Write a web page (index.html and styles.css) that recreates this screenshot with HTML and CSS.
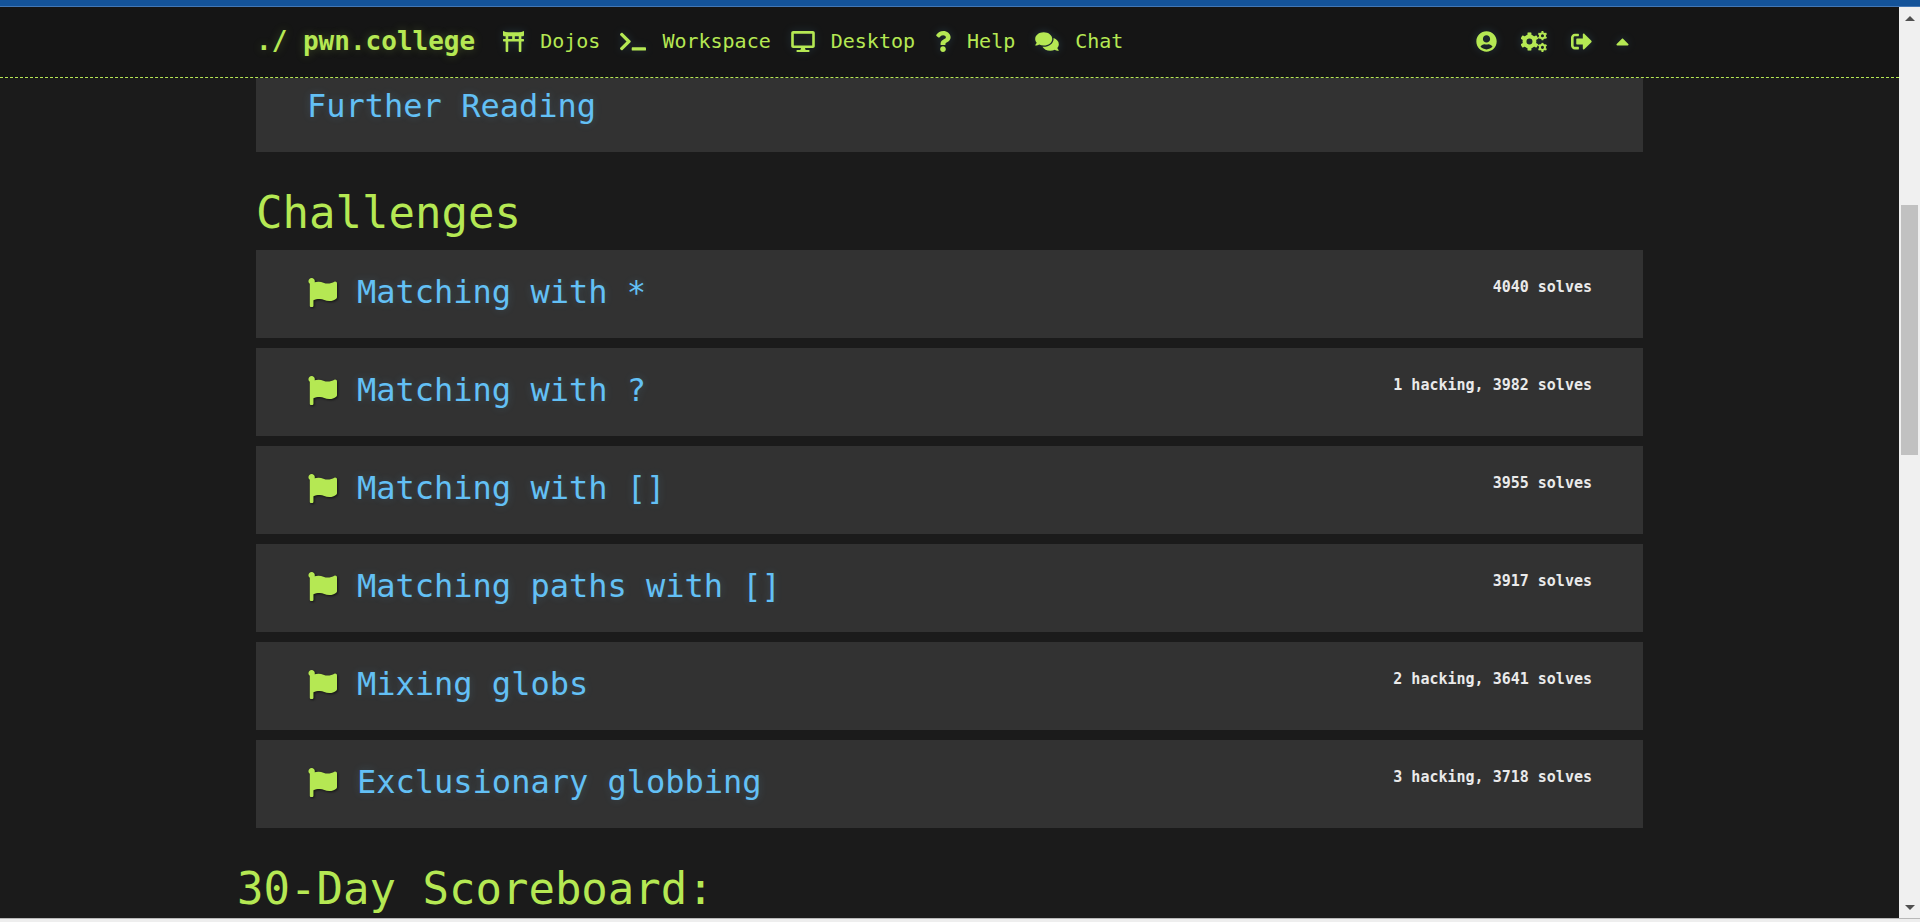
FILE: index.html
```html
<!DOCTYPE html>
<html lang="en">
<head>
<meta charset="utf-8">
<title>pwn.college</title>
<link rel="stylesheet" href="styles.css">
</head>
<body>
<svg class="sprite" aria-hidden="true">
  <symbol id="flag" viewBox="0 0 512 512"><path d="M349.565 98.783C295.978 98.783 251.721 64 184.348 64c-24.955 0-47.309 4.384-68.045 12.013a55.947 55.947 0 0 0 3.586-23.562C118.117 24.015 94.806 1.206 66.338.048 34.345-1.254 8 24.296 8 56c0 19.026 9.497 35.825 24 45.945V488c0 13.255 10.745 24 24 24h16c13.255 0 24-10.745 24-24v-94.4c28.311-12.064 63.582-22.122 114.435-22.122 53.588 0 97.844 34.783 165.217 34.783 48.169 0 86.667-16.294 122.505-40.858C506.84 359.452 512 349.571 512 339.045v-243.1c0-23.393-24.269-38.87-45.485-29.016-34.338 15.948-76.454 31.854-116.95 31.854z"/></symbol>
  <symbol id="gear" viewBox="-100 -100 200 200">
    <circle r="53" fill="none" stroke="currentColor" stroke-width="42"/>
    <g id="teeth"><rect x="-21" y="-98" width="42" height="36" rx="7"/><rect x="-21" y="62" width="42" height="36" rx="7"/></g>
    <use href="#teeth" transform="rotate(60)"/><use href="#teeth" transform="rotate(120)"/>
  </symbol>
</svg>
<div class="window-edge"></div>
<div class="viewport">
  <div class="page">
    <header class="navbar">
      <div class="container nav-row">
        <a class="brand" href="#">./ pwn.college</a>
        <nav class="nav-links">
          <a href="#"><svg class="icon w21" viewBox="0 0 512 512"><path d="M376.45 32h-240.9A303.17 303.17 0 0 1 0 0v96c0 17.67 14.33 32 32 32h32v64H16c-8.84 0-16 7.16-16 16v32c0 8.84 7.16 16 16 16h48v240c0 8.84 7.16 16 16 16h32c8.84 0 16-7.16 16-16V256h256v240c0 8.84 7.16 16 16 16h32c8.84 0 16-7.16 16-16V256h48c8.84 0 16-7.16 16-16v-32c0-8.84-7.16-16-16-16h-48v-64h32c17.67 0 32-14.33 32-32V0a303.17 303.17 0 0 1-135.55 32zM128 128h96v64h-96v-64zm256 64h-96v-64h96v64z"/></svg><span>Dojos</span></a>
          <a href="#"><svg class="icon w26" viewBox="0 0 640 512"><path d="M257.981 272.971L63.638 467.314c-9.373 9.373-24.569 9.373-33.941 0L7.029 444.647c-9.357-9.357-9.375-24.522-.04-33.901L161.011 256 6.99 101.255c-9.335-9.379-9.317-24.544.04-33.901l22.667-22.667c9.373-9.373 24.569-9.373 33.941 0L257.981 239.03c9.373 9.372 9.373 24.568 0 33.941zM640 456v-32c0-13.255-10.745-24-24-24H312c-13.255 0-24 10.745-24 24v32c0 13.255 10.745 24 24 24h304c13.255 0 24-10.745 24-24z"/></svg><span>Workspace</span></a>
          <a href="#"><svg class="icon w24" viewBox="0 0 576 512"><path d="M528 0H48C21.5 0 0 21.5 0 48v320c0 26.5 21.5 48 48 48h192l-16 48h-72c-13.3 0-24 10.7-24 24s10.7 24 24 24h272c13.3 0 24-10.7 24-24s-10.7-24-24-24h-72l-16-48h192c26.5 0 48-21.5 48-48V48c0-26.5-21.5-48-48-48zm-16 352H64V64h448v288z"/></svg><span>Desktop</span></a>
          <a href="#"><svg class="icon w16" viewBox="0 0 384 512"><path d="M202.021 0C122.202 0 70.503 32.703 29.914 91.026c-7.363 10.58-5.093 25.086 5.178 32.874l43.138 32.709c10.373 7.865 25.132 6.026 33.253-4.148 25.049-31.381 43.63-49.449 82.757-49.449 30.764 0 68.816 19.799 68.816 49.631 0 22.552-18.617 34.134-48.993 51.164-35.423 19.86-82.299 44.576-82.299 106.405V320c0 13.255 10.745 24 24 24h72.471c13.255 0 24-10.745 24-24v-5.773c0-42.86 125.268-44.645 125.268-160.627C377.504 66.256 286.902 0 202.021 0zM192 373.459c-38.196 0-69.271 31.075-69.271 69.271 0 38.195 31.075 69.27 69.271 69.27s69.271-31.075 69.271-69.271-31.075-69.27-69.271-69.27z"/></svg><span>Help</span></a>
          <a href="#"><svg class="icon w24" viewBox="0 0 576 512"><path d="M416 192c0-88.4-93.1-160-208-160S0 103.6 0 192c0 34.3 14.1 65.9 38 92-13.4 30.2-35.5 54.2-35.8 54.5-2.2 2.3-2.8 5.7-1.5 8.7S4.8 352 8 352c36.6 0 66.9-12.3 88.7-25 32.2 15.7 70.3 25 111.3 25 114.9 0 208-71.6 208-160zm122 220c23.9-26 38-57.7 38-92 0-66.9-53.5-124.2-129.3-148.1.9 6.6 1.3 13.3 1.3 20.1 0 105.9-107.7 192-240 192-10.8 0-21.3-.8-31.7-1.9C207.8 439.6 281.8 480 368 480c41 0 79.1-9.2 111.3-25 21.8 12.7 52.1 25 88.7 25 3.2 0 6.1-1.9 7.3-4.8 1.3-2.9.7-6.3-1.5-8.7-.3-.3-22.4-24.2-35.8-54.5z"/></svg><span>Chat</span></a>
        </nav>
        <div class="nav-tools">
          <a href="#" aria-label="Profile"><svg class="icon w21" viewBox="0 0 496 512"><path d="M248 8C111 8 0 119 0 256s111 248 248 248 248-111 248-248S385 8 248 8zm0 96c48.6 0 88 39.4 88 88s-39.4 88-88 88-88-39.4-88-88 39.4-88 88-88zm0 344c-58.7 0-111.3-26.6-146.5-68.2 18.8-35.4 55.6-59.8 98.5-59.8 2.4 0 4.8.4 7.1 1.1 13 4.2 26.6 6.9 40.9 6.9 14.3 0 28-2.7 40.9-6.9 2.3-.7 4.7-1.1 7.1-1.1 42.9 0 79.7 24.4 98.5 59.8C359.3 421.4 306.7 448 248 448z"/></svg></a>
          <a href="#" aria-label="Settings"><svg class="icon w26" viewBox="0 0 640 512"><use href="#gear" x="-22" y="26" width="460" height="460"/><use href="#gear" x="410" y="-4" width="236" height="236"/><use href="#gear" x="410" y="282" width="236" height="236"/></svg></a>
          <a href="#" aria-label="Log out"><svg class="icon w21" viewBox="0 0 512 512"><path d="M497 273L329 441c-15 15-41 4.5-41-17v-96H152c-13.3 0-24-10.7-24-24v-96c0-13.3 10.7-24 24-24h136V88c0-21.4 25.9-32 41-17l168 168c9.3 9.4 9.3 24.6 0 34zM192 436v-40c0-6.6-5.4-12-12-12H96c-17.7 0-32-14.3-32-32V160c0-17.7 14.3-32 32-32h84c6.6 0 12-5.4 12-12V76c0-6.6-5.4-12-12-12H96c-53 0-96 43-96 96v192c0 53 43 96 96 96h84c6.6 0 12-5.4 12-12z"/></svg></a>
          <button type="button" aria-label="Hide navigation bar"><svg class="icon w13" viewBox="0 0 320 512"><path d="M288.662 352H31.338c-17.818 0-26.741-21.543-14.142-34.142l128.662-128.662c7.81-7.81 20.474-7.81 28.284 0l128.662 128.662c12.6 12.599 3.676 34.142-14.142 34.142z"/></svg></button>
        </div>
      </div>
    </header>
    <main class="container">
      <section class="cards readings">
        <article class="card"><h4 class="title"><a href="#">Further Reading</a></h4></article>
      </section>
      <h2>Challenges</h2>
      <section class="cards">
        <article class="card"><svg class="flag"><use href="#flag"/></svg><h4 class="title"><a href="#">Matching with *</a></h4><span class="solves">4040 solves</span></article>
        <article class="card"><svg class="flag"><use href="#flag"/></svg><h4 class="title"><a href="#">Matching with ?</a></h4><span class="solves">1 hacking, 3982 solves</span></article>
        <article class="card"><svg class="flag"><use href="#flag"/></svg><h4 class="title"><a href="#">Matching with []</a></h4><span class="solves">3955 solves</span></article>
        <article class="card"><svg class="flag"><use href="#flag"/></svg><h4 class="title"><a href="#">Matching paths with []</a></h4><span class="solves">3917 solves</span></article>
        <article class="card"><svg class="flag"><use href="#flag"/></svg><h4 class="title"><a href="#">Mixing globs</a></h4><span class="solves">2 hacking, 3641 solves</span></article>
        <article class="card"><svg class="flag"><use href="#flag"/></svg><h4 class="title"><a href="#">Exclusionary globbing</a></h4><span class="solves">3 hacking, 3718 solves</span></article>
      </section>
      <h2 class="scoreboard">30-Day Scoreboard:</h2>
    </main>
  </div>
  <div class="scrollbar">
    <button type="button" aria-label="Scroll up"><svg viewBox="0 0 10 5"><path d="M5 0l5 5H0z"/></svg></button>
    <div class="track"><div class="thumb"></div></div>
    <button type="button" aria-label="Scroll down"><svg viewBox="0 0 10 5"><path d="M0 0h10L5 5z"/></svg></button>
  </div>
</div>
<div class="window-foot"></div>
</body>
</html>
```

FILE: styles.css
```css
* {
  box-sizing: border-box;
}

body {
  margin: 0;
  height: 100vh;
  display: flex;
  flex-direction: column;
  overflow: hidden;
  background: #1b1b1b;
  color: #b5e853;
  font-family: "DejaVu Sans Mono", "Liberation Mono", monospace;
  font-size: 20px;
}

a {
  color: inherit;
  text-decoration: none;
}

button {
  margin: 0;
  padding: 0;
  border: 0;
  background: none;
  color: inherit;
  font: inherit;
}

svg {
  display: block;
  fill: currentColor;
}

.sprite {
  position: absolute;
  width: 0;
  height: 0;
}

.window-edge {
  flex: none;
  height: 7px;
  background: #145399;
  border-bottom: 1px solid #4377b5;
}

.window-foot {
  flex: none;
  height: 4px;
  background: #eeeeee;
  border-top: 1px solid #b8b8b8;
}

.viewport {
  flex: 1;
  min-height: 0;
  display: flex;
}

.page {
  flex: 1;
  min-width: 0;
  overflow: hidden;
}

.container {
  width: 100%;
  max-width: 1425px;
  margin: 0 auto;
  padding: 0 19px;
}

/* Navigation */
.navbar {
  position: relative;
  z-index: 1;
  background: #151515;
  border-bottom: 1px dashed #b5e853;
}

.nav-row {
  display: flex;
  align-items: center;
  height: 70px;
  padding-bottom: 2px;
}

.brand {
  margin-right: 28px;
  font-size: 26px;
  font-weight: bold;
  line-height: 32px;
  text-shadow: 0 0 10px rgba(181, 232, 83, 0.25);
}

.nav-links,
.nav-links a,
.nav-tools {
  display: flex;
  align-items: center;
}

.nav-links {
  gap: 20px;
}

.nav-links a {
  gap: 16px;
  line-height: 24px;
}

.nav-tools {
  gap: 24px;
  margin-left: auto;
  padding-right: 14px;
}

.icon {
  flex: none;
  height: 21px;
  filter: drop-shadow(0 0 4px rgba(95, 190, 240, 0.2));
}

.w13 { width: 13px; }
.w16 { width: 16px; }
.w21 { width: 21px; }
.w24 { width: 24px; }
.w26 { width: 26px; }

/* Content */
h2 {
  margin: 35px 0 11px;
  font-size: 44px;
  font-weight: normal;
  line-height: 52px;
}

.scoreboard {
  margin-left: -19px;
}

.cards {
  display: flex;
  flex-direction: column;
  gap: 10px;
}

.readings {
  margin-top: -14px;
}

.card {
  display: flex;
  align-items: flex-start;
  padding: 22px 51px 26px;
  background: #323232;
}

.flag {
  flex: none;
  align-self: center;
  width: 29px;
  height: 29px;
  margin: 0 20px 0 1px;
  filter: drop-shadow(1px 1px 1px rgba(0, 0, 0, 0.6));
}

.title {
  margin: 0;
  color: #63c0f5;
  font-size: 32px;
  font-weight: normal;
  line-height: 40px;
  text-shadow: 0 0 8px rgba(99, 192, 245, 0.2);
}

.solves {
  margin-left: auto;
  padding-top: 5px;
  color: #eaeaea;
  font-size: 15px;
  font-weight: bold;
  line-height: 20px;
}

/* Scrollbar */
.scrollbar {
  flex: none;
  display: flex;
  flex-direction: column;
  width: 21px;
  background: #f0f0f0;
  color: #505050;
}

.scrollbar button {
  display: grid;
  place-items: center;
  height: 22px;
}

.scrollbar svg {
  width: 10px;
  height: 5px;
}

.track {
  flex: 1;
  display: grid;
  grid-template-rows: 176fr 250fr 441fr;
  padding: 0 2px;
}

.thumb {
  grid-row: 2;
  background: #c1c1c1;
}
```
